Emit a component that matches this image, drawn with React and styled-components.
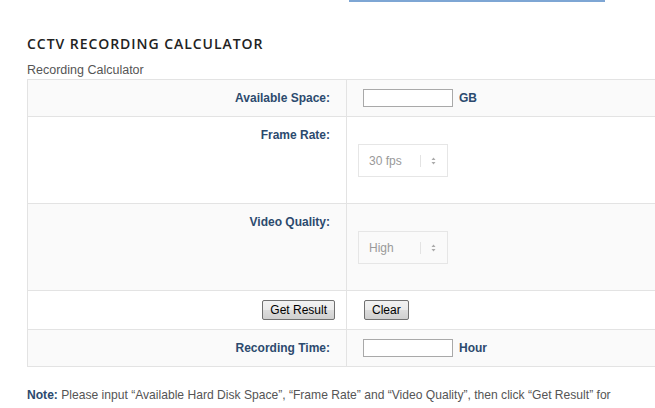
import styled, { createGlobalStyle } from 'styled-components'

const GlobalStyle = createGlobalStyle`
  html, body {
    margin: 0;
    padding: 0;
    background: #fff;
    overflow: hidden;
  }
  body {
    font-family: "Liberation Sans", Arial, sans-serif;
    font-size: 12px;
    color: #555;
  }
`

const TopLine = styled.div`
  margin-left: 349px;
  width: 256px;
  height: 2px;
  background: #7ea6d4;
`

const Page = styled.div`
  padding-left: 27px;
  overflow: hidden;
`

const Title = styled.h2`
  margin: 32px 0 0;
  font-family: "Open Sans", sans-serif;
  font-weight: 600;
  font-size: 14px;
  line-height: 20px;
  letter-spacing: 0.95px;
  color: #222;
`

const Subtitle = styled.div`
  margin-top: 8px;
  font-size: 12.5px;
  line-height: 16px;
  color: #555;
`

const Table = styled.table`
  margin-top: 1px;
  width: 660px;
  border-collapse: collapse;
  table-layout: fixed;
`

const Row = styled.tr`
  height: ${p => p.$h}px;
  background: ${p => (p.$alt ? '#fafafa' : '#fff')};
`

const LabelCell = styled.td`
  width: 319px;
  box-sizing: border-box;
  border: 1px solid #e3e3e3;
  padding: 0 ${p => p.$right ?? 16}px 0 0;
  text-align: right;
  vertical-align: top;
  font-weight: bold;
  color: #2c4a6e;
  line-height: 14px;
  padding-top: ${p => p.$top ?? 11}px;
`

const ValueCell = styled.td`
  border: 1px solid #e3e3e3;
  padding: 0 0 0 ${p => p.$left ?? 16}px;
  vertical-align: top;
  padding-top: ${p => p.$top ?? 9}px;
`

const Field = styled.div`
  display: flex;
  align-items: center;
  gap: 6px;
`

const TextInput = styled.input`
  box-sizing: border-box;
  width: 90px;
  height: 18px;
  margin: 0;
  border: 1px solid #a9a9a9;
  background: #fff;
  padding: 0 3px;
`

const Unit = styled.span`
  font-weight: bold;
  color: #2c4a6e;
`

const SelectBox = styled.div`
  box-sizing: border-box;
  width: 90px;
  height: 33px;
  border: 1px solid #e6e6e6;
  display: flex;
  align-items: center;
  padding-left: 10px;
  color: #999;
  font-size: 12px;
`

const SelectText = styled.span`
  flex: 1;
`

const SelectDivider = styled.span`
  width: 1px;
  height: 12px;
  background: #e3e3e3;
`

const SelectArrow = styled.svg`
  width: 5px;
  height: 8px;
  margin: 0 11px 0 10px;
`

const Button = styled.button`
  box-sizing: border-box;
  height: 20px;
  padding: 0 7px;
  margin: 0;
  font-family: "Liberation Sans", Arial, sans-serif;
  font-size: 12px;
  color: #000;
  border: 1px solid #707070;
  border-radius: 2px;
  background: linear-gradient(#f2f2f2, #ebebeb 50%, #dddddd 50%, #cfcfcf);
`

const Note = styled.p`
  margin: 20px 0 0;
  line-height: 16px;
  white-space: nowrap;
  color: #555;
  font-size: 12.1px;
`

const NoteLabel = styled.b`
  color: #2c4a6e;
`

function FakeSelect({ value }) {
  return (
    <SelectBox>
      <SelectText>{value}</SelectText>
      <SelectDivider />
      <SelectArrow viewBox="0 0 5 8">
        <path d="M2.5 0.5 L4.5 3 L0.5 3 Z M0.5 5 L4.5 5 L2.5 7.5 Z" fill="#aaa" />
      </SelectArrow>
    </SelectBox>
  )
}

export default function App() {
  return (
    <>
      <GlobalStyle />
      <TopLine />
      <Page>
        <Title>CCTV RECORDING CALCULATOR</Title>
        <Subtitle>Recording Calculator</Subtitle>
        <Table>
          <tbody>
            <Row $h={37} $alt>
              <LabelCell>Available Space:</LabelCell>
              <ValueCell>
                <Field>
                  <TextInput type="text" />
                  <Unit>GB</Unit>
                </Field>
              </ValueCell>
            </Row>
            <Row $h={87}>
              <LabelCell>Frame Rate:</LabelCell>
              <ValueCell $left={11} $top={27}>
                <FakeSelect value="30 fps" />
              </ValueCell>
            </Row>
            <Row $h={87} $alt>
              <LabelCell>Video Quality:</LabelCell>
              <ValueCell $left={11} $top={27}>
                <FakeSelect value="High" />
              </ValueCell>
            </Row>
            <Row $h={39}>
              <LabelCell $top={9} $right={11}>
                <Button>Get Result</Button>
              </LabelCell>
              <ValueCell $left={17} $top={9}>
                <Button>Clear</Button>
              </ValueCell>
            </Row>
            <Row $h={37} $alt>
              <LabelCell>Recording Time:</LabelCell>
              <ValueCell>
                <Field>
                  <TextInput type="text" />
                  <Unit>Hour</Unit>
                </Field>
              </ValueCell>
            </Row>
          </tbody>
        </Table>
        <Note>
          <NoteLabel>Note:</NoteLabel> Please input “Available Hard Disk Space”, “Frame Rate” and “Video Quality”, then click “Get Result” for
        </Note>
      </Page>
    </>
  )
}
